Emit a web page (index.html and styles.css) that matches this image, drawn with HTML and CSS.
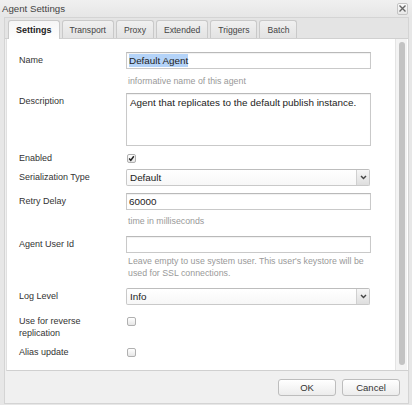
FILE: index.html
```html
<!DOCTYPE html>
<html>
<head>
<meta charset="utf-8">
<link rel="stylesheet" href="styles.css">
</head>
<body>
<div class="dialog">
  <div class="titlebar">
    <span class="title">Agent Settings</span>
    <span class="close"><svg width="9" height="9" viewBox="0 0 9 9"><path d="M1.5 1.5 L7.5 7.5 M7.5 1.5 L1.5 7.5" stroke="#666" stroke-width="1.4" fill="none"/></svg></span>
  </div>
  <div class="frame">
    <div class="tabs">
      <div class="tab active">Settings</div>
      <div class="tab">Transport</div>
      <div class="tab">Proxy</div>
      <div class="tab">Extended</div>
      <div class="tab">Triggers</div>
      <div class="tab">Batch</div>
    </div>
    <div class="panel">
      <div class="form">
        <div class="row">
          <div class="label">Name</div>
          <div class="field">
            <div class="input"><span class="sel">Default Agent</span></div>
            <div class="hint hint-name">informative name of this agent</div>
          </div>
        </div>
        <div class="row mt6">
          <div class="label">Description</div>
          <div class="field"><div class="textarea">Agent that replicates to the default publish instance.</div></div>
        </div>
        <div class="row row-small mt6">
          <div class="label">Enabled</div>
          <div class="field"><span class="check checked"><svg width="7" height="7" viewBox="0 0 7 7"><path d="M1.2 3.6 L2.8 5.4 L5.8 1.3" stroke="#222" stroke-width="1.5" fill="none"/></svg></span></div>
        </div>
        <div class="row mt5">
          <div class="label">Serialization Type</div>
          <div class="field"><div class="select"><span class="value">Default</span><span class="arrow"><svg width="7" height="5" viewBox="0 0 7 5"><path d="M1 1 L3.5 3.6 L6 1" stroke="#444" stroke-width="1.4" fill="none"/></svg></span></div></div>
        </div>
        <div class="row mt7">
          <div class="label">Retry Delay</div>
          <div class="field">
            <div class="input">60000</div>
            <div class="hint hint-retry">time in milliseconds</div>
          </div>
        </div>
        <div class="row mt9">
          <div class="label">Agent User Id</div>
          <div class="field">
            <div class="input"></div>
            <div class="hint hint-user">Leave empty to use system user. This user's keystore will be used for SSL connections.</div>
          </div>
        </div>
        <div class="row mt9">
          <div class="label">Log Level</div>
          <div class="field"><div class="select"><span class="value">Info</span><span class="arrow"><svg width="7" height="5" viewBox="0 0 7 5"><path d="M1 1 L3.5 3.6 L6 1" stroke="#444" stroke-width="1.4" fill="none"/></svg></span></div></div>
        </div>
        <div class="row row-small mt10">
          <div class="label multi">Use for reverse<br>replication</div>
          <div class="field"><span class="check top"></span></div>
        </div>
        <div class="row row-small mt7">
          <div class="label">Alias update</div>
          <div class="field"><span class="check"></span></div>
        </div>
      </div>
      <div class="scroll"><div class="thumb"></div></div>
    </div>
    <div class="footer">
      <div class="button">OK</div>
      <div class="button">Cancel</div>
    </div>
  </div>
</div>
</body>
</html>
```
FILE: styles.css
```css
* { box-sizing: border-box; }
html, body {
  margin: 0;
  padding: 0;
}
body {
  width: 412px;
  height: 405px;
  overflow: hidden;
  background: #e7e7e7;
  font-family: "Liberation Sans", Arial, sans-serif;
  font-size: 9px;
  color: #333;
}
.dialog {
  height: 405px;
  display: flex;
  flex-direction: column;
}
.titlebar {
  height: 17px;
  flex: none;
  display: flex;
  align-items: center;
  justify-content: space-between;
  padding: 0 4px 0 2px;
  background: linear-gradient(#f0f0f0, #e6e6e6);
}
.title {
  font-size: 9.7px;
  color: #444;
}
.close {
  width: 11px;
  height: 12px;
  display: flex;
  align-items: center;
  justify-content: center;
  border: 1px solid #c4c4c4;
  border-radius: 2px;
  background: linear-gradient(#fafafa, #e8e8e8);
}
.frame {
  flex: 1;
  display: flex;
  flex-direction: column;
  margin: 0 3px 1px 4px;
  border: 1px solid #d4d4d4;
  background: #f0f0f0;
}
.tabs {
  height: 21px;
  flex: none;
  display: flex;
  align-items: flex-end;
  gap: 2px;
  padding-left: 3px;
  background: #e4e4e4;
  border-bottom: 1px solid #d0d0d0;
}
.tab {
  height: 18px;
  padding: 0 7px;
  display: flex;
  align-items: center;
  border: 1px solid #c9c9c9;
  border-bottom: none;
  border-radius: 3px 3px 0 0;
  background: linear-gradient(#f0f0f0, #e3e3e3);
  font-size: 8.6px;
  color: #444;
}
.tab.active {
  font-weight: bold;
  font-size: 9px;
  color: #222;
  padding: 0 7px;
  background: linear-gradient(#f6f6f6, #ffffff);
  height: 19px;
  margin-bottom: -1px;
}
.panel {
  flex: 1;
  display: flex;
  margin: 0 0 0 1px;
  background: #fff;
  border-bottom: 1px solid #d0d0d0;
  border-left: 1px solid #e0e0e0;
}
.form {
  flex: 1;
  padding: 13px 0 0 12px;
}
.row {
  display: grid;
  grid-template-columns: 107px 245px;
  align-items: start;
}
.mt5 { margin-top: 5px; }
.mt6 { margin-top: 6px; }
.mt7 { margin-top: 7px; }
.mt9 { margin-top: 9px; }
.mt10 { margin-top: 10px; }
.label {
  line-height: 17px;
  color: #333;
}
.row-small .label {
  line-height: 12px;
}
.label.multi {
  line-height: 12px;
}
.row-small .field {
  height: 12px;
  display: flex;
  align-items: center;
}
.row-small .field .check.top {
  align-self: flex-start;
  margin-top: 2px;
}
.input {
  height: 17px;
  border: 1px solid #c9c9c9;
  border-top-color: #b9b9b9;
  box-shadow: inset 0 1px 1px rgba(0,0,0,0.06);
  background: #fff;
  padding: 0 2px;
  font-size: 9.9px;
  line-height: 15px;
  color: #222;
}
.sel {
  background: #b4d3f8;
  padding: 1px 0;
}
.textarea {
  height: 53px;
  border: 1px solid #c9c9c9;
  border-top-color: #b9b9b9;
  box-shadow: inset 0 1px 1px rgba(0,0,0,0.06);
  padding: 2px 3px;
  font-size: 9.9px;
  line-height: 13px;
  color: #222;
}
.hint {
  color: #999;
  font-size: 8.8px;
  line-height: 12px;
  padding-left: 2px;
}
.hint-name { margin-top: 6px; }
.hint-retry { margin-top: 5px; }
.hint-user { margin-top: 2px; }
.select {
  width: 244px;
  height: 17px;
  display: flex;
  border: 1px solid #c9c9c9;
  border-top-color: #bdbdbd;
  border-radius: 2px;
  background: linear-gradient(#ffffff, #f7f7f7);
}
.select .value {
  flex: 1;
  padding-left: 3px;
  font-size: 9.9px;
  line-height: 15px;
  color: #222;
}
.select .arrow {
  width: 13px;
  display: flex;
  align-items: center;
  justify-content: center;
  border-left: 1px solid #d0d0d0;
  background: linear-gradient(#f6f6f6, #dedede);
}
.check {
  width: 9px;
  height: 9px;
  margin-left: 1px;
  display: flex;
  align-items: center;
  justify-content: center;
  border: 1px solid #b0b0b0;
  border-radius: 2px;
  background: linear-gradient(#ffffff, #e6e6e6);
}
.scroll {
  width: 13px;
  display: flex;
  justify-content: center;
  padding: 3px 0 5px;
  background: #f3f3f3;
  border-left: 1px solid #e4e4e4;
  border-right: 1px solid #fff;
}
.thumb {
  width: 6px;
  border-radius: 3px;
  background: #c3c3c3;
}
.footer {
  height: 32px;
  flex: none;
  display: flex;
  align-items: center;
  justify-content: flex-end;
  gap: 6px;
  padding: 1px 8px 0 0;
  background: #f0f0f0;
}
.button {
  width: 58px;
  height: 17px;
  display: flex;
  align-items: center;
  justify-content: center;
  border: 1px solid #bdbdbd;
  border-radius: 3px;
  background: linear-gradient(#ffffff, #ececec);
  font-size: 9.5px;
  color: #333;
}
```
